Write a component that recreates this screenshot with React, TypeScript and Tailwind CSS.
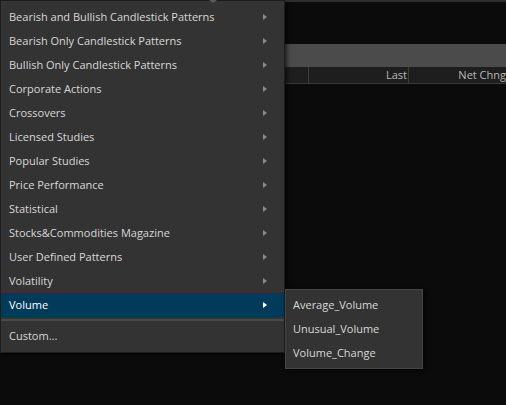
import React from "react";

const items = [
  "Bearish and Bullish Candlestick Patterns",
  "Bearish Only Candlestick Patterns",
  "Bullish Only Candlestick Patterns",
  "Corporate Actions",
  "Crossovers",
  "Licensed Studies",
  "Popular Studies",
  "Price Performance",
  "Statistical",
  "Stocks&Commodities Magazine",
  "User Defined Patterns",
  "Volatility",
  "Volume",
];

const subItems = ["Average_Volume", "Unusual_Volume", "Volume_Change"];

function Caret({ active }: { active: boolean }) {
  return (
    <svg width="4" height="6" viewBox="0 0 4 6" className="shrink-0">
      <path d="M0 0 L4 3 L0 6 Z" fill={active ? "#ffffff" : "#8a8a8a"} />
    </svg>
  );
}

export default function App() {
  return (
    <div
      className="relative h-[405px] w-[506px] overflow-hidden bg-[#0b0b0b] text-[11px]"
      style={{ fontFamily: '"Open Sans", "Noto Sans", sans-serif' }}
    >
      {/* background table behind the menu */}
      <div className="h-[2px] w-full bg-[#2e2e2e]" />
      <div className="h-[42px]" />
      <div className="h-[23px] bg-[#4b4b4b]" />
      <div className="flex h-[17px] border-b border-[#3a3a3a] bg-[#1e1e1e] text-[#b8b8b8]">
        <div className="w-[309px] border-r border-[#3d3d3d]" />
        <div className="flex w-[100px] items-center justify-end border-r border-[#3d3d3d] pr-[1px]">Last</div>
        <div className="flex flex-1 items-center justify-end whitespace-nowrap">Net Chng</div>
      </div>

      {/* main menu */}
      <div className="absolute left-0 top-0 w-[285px] border border-[#1c1c1c] bg-[#333333] pb-[1px] pt-[4px] text-[#d8d8d8] shadow-[2px_2px_4px_rgba(0,0,0,0.6)]">
        <div className="absolute left-[208px] top-[-1px] h-0 w-0 border-x-[4px] border-t-[3px] border-x-transparent border-t-[#5a5a5a]" />
        {items.map((label) => {
          const active = label === "Volume";
          return (
            <div
              key={label}
              className={`flex h-[24px] items-center justify-between pl-[8px] pr-[17px] ${
                active ? "bg-[#023a5a] text-white" : ""
              }`}
            >
              <span className="whitespace-nowrap">{label}</span>
              <Caret active={active} />
            </div>
          );
        })}
        <div className="mb-[1px] mt-[2px] h-[2px] bg-[#4a4a4a]" />
        <div className="flex h-[29px] items-center pl-[8px]">Custom...</div>
      </div>

      {/* submenu */}
      <div className="absolute left-[285px] top-[289px] w-[138px] border border-[#454545] bg-[#333333] py-[3px] text-[#d8d8d8] shadow-[2px_2px_4px_rgba(0,0,0,0.6)]">
        {subItems.map((label) => (
          <div key={label} className="flex h-[24px] items-center whitespace-nowrap pl-[7px]">
            {label}
          </div>
        ))}
      </div>
    </div>
  );
}
